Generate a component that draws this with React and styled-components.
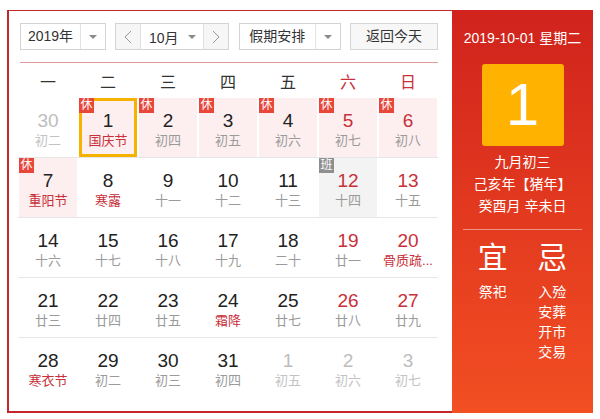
import React from 'react'
import styled, { createGlobalStyle } from 'styled-components'

const GlobalStyle = createGlobalStyle`
  body {
    margin: 0;
    background: #fff;
    font-family: "Liberation Sans", Arial, "Noto Sans CJK SC", sans-serif;
  }
`

const RED = '#c8303a'

const weekDays = [
  { label: '一' },
  { label: '二' },
  { label: '三' },
  { label: '四' },
  { label: '五' },
  { label: '六', weekend: true },
  { label: '日', weekend: true }
]

// day, lunar, flags: o = other month, r = 休, w = 班, f = festival, e = weekend, t = today
const weeks = [
  [['30', '初二', 'o'], ['1', '国庆节', 'rft'], ['2', '初四', 'r'], ['3', '初五', 'r'], ['4', '初六', 'r'], ['5', '初七', 're'], ['6', '初八', 're']],
  [['7', '重阳节', 'rf'], ['8', '寒露', 'f'], ['9', '十一', ''], ['10', '十二', ''], ['11', '十三', ''], ['12', '十四', 'we'], ['13', '十五', 'e']],
  [['14', '十六', ''], ['15', '十七', ''], ['16', '十八', ''], ['17', '十九', ''], ['18', '二十', ''], ['19', '廿一', 'e'], ['20', '骨质疏...', 'fe']],
  [['21', '廿三', ''], ['22', '廿四', ''], ['23', '廿五', ''], ['24', '霜降', 'f'], ['25', '廿七', ''], ['26', '廿八', 'e'], ['27', '廿九', 'e']],
  [['28', '寒衣节', 'f'], ['29', '初二', ''], ['30', '初三', ''], ['31', '初四', ''], ['1', '初五', 'o'], ['2', '初六', 'o'], ['3', '初七', 'o']]
]

const Calendar = () => {
  return (
    <>
      <GlobalStyle />
      <Wrapper>
        <Main>
          <Toolbar>
            <Select width={86}>
              <SelectText>2019年</SelectText>
              <SelectCaret />
            </Select>
            <MonthGroup>
              <ArrowBtn side='left'>
                <svg width='8' height='14' viewBox='0 0 8 14'>
                  <polyline points='7,1 1,7 7,13' fill='none' stroke='#999' strokeWidth='1' />
                </svg>
              </ArrowBtn>
              <MonthLabel>
                10月
                <Caret />
              </MonthLabel>
              <ArrowBtn side='right'>
                <svg width='8' height='14' viewBox='0 0 8 14'>
                  <polyline points='1,1 7,7 1,13' fill='none' stroke='#999' strokeWidth='1' />
                </svg>
              </ArrowBtn>
            </MonthGroup>
            <Select width={102}>
              <SelectText>假期安排</SelectText>
              <SelectCaret />
            </Select>
            <TodayBtn>返回今天</TodayBtn>
          </Toolbar>
          <RedLine />
          <WeekHeader>
            {weekDays.map(d => (
              <WeekDay key={d.label} weekend={d.weekend}>
                {d.label}
              </WeekDay>
            ))}
          </WeekHeader>
          {weeks.map((week, i) => (
            <Row key={i} last={i === weeks.length - 1}>
              {week.map(([day, lunar, flags], j) => {
                const rest = flags.includes('r')
                const work = flags.includes('w')
                const other = flags.includes('o')
                return (
                  <Cell key={j} rest={rest} work={work} today={flags.includes('t')}>
                    {rest && <Badge>休</Badge>}
                    {work && <Badge work>班</Badge>}
                    <Num other={other} red={flags.includes('e')}>{day}</Num>
                    <Lunar other={other} festival={flags.includes('f')}>{lunar}</Lunar>
                  </Cell>
                )
              })}
            </Row>
          ))}
        </Main>
        <Side>
          <DateLine>2019-10-01 星期二</DateLine>
          <BigDay>1</BigDay>
          <LunarInfo>
            <div>九月初三</div>
            <div>己亥年【猪年】</div>
            <div>癸酉月 辛未日</div>
          </LunarInfo>
          <Split />
          <YiJi>
            <YiJiCol>
              <YiJiTitle>宜</YiJiTitle>
              <YiJiItem>祭祀</YiJiItem>
            </YiJiCol>
            <YiJiCol>
              <YiJiTitle>忌</YiJiTitle>
              <YiJiItem>入殓</YiJiItem>
              <YiJiItem>安葬</YiJiItem>
              <YiJiItem>开市</YiJiItem>
              <YiJiItem>交易</YiJiItem>
            </YiJiCol>
          </YiJi>
        </Side>
      </Wrapper>
    </>
  )
}

export default Calendar

const Wrapper = styled.div`
  display: flex;
  width: 586px;
  height: 403px;
  margin: 10px 0 0 7px;
`

const Main = styled.div`
  width: 445px;
  box-sizing: border-box;
  border: solid #c4262c;
  border-width: 1px 0 2px 2px;
  padding: 12px 14px 0 9px;
  background: #fff;
`

const Toolbar = styled.div`
  display: flex;
  justify-content: space-between;
  height: 27px;
  margin-left: 2px;
`

const Select = styled.div`
  display: flex;
  width: ${p => p.width}px;
  box-sizing: border-box;
  border: 1px solid #d3d3d3;
  background: #fff;
`

const SelectText = styled.div`
  flex: 1;
  text-align: center;
  line-height: 25px;
  font-size: 14px;
  color: #333;
`

const Caret = styled.span`
  display: inline-block;
  width: 0;
  height: 0;
  border-left: 4px solid transparent;
  border-right: 4px solid transparent;
  border-top: 4px solid #8a8a8a;
`

const SelectCaret = styled(Caret)`
  display: block;
  width: 24px;
  height: 25px;
  border: none;
  border-left: 1px solid #e3e3e3;
  position: relative;

  &::after {
    content: '';
    position: absolute;
    left: 8px;
    top: 11px;
    border-left: 4px solid transparent;
    border-right: 4px solid transparent;
    border-top: 4px solid #8a8a8a;
  }
`

const MonthGroup = styled.div`
  display: flex;
  width: 114px;
  box-sizing: border-box;
  border: 1px solid #d3d3d3;
`

const ArrowBtn = styled.div`
  width: 24px;
  display: flex;
  align-items: center;
  justify-content: center;
  background: #f6f6f6;
  ${p => (p.side === 'left' ? 'border-right' : 'border-left')}: 1px solid #e0e0e0;
`

const MonthLabel = styled.div`
  flex: 1;
  display: flex;
  align-items: center;
  justify-content: center;
  gap: 9px;
  font-size: 14px;
  color: #333;
`

const TodayBtn = styled.div`
  width: 88px;
  box-sizing: border-box;
  border: 1px solid #d6d6d6;
  background: #f7f7f7;
  text-align: center;
  line-height: 25px;
  font-size: 14px;
  color: #333;
`

const RedLine = styled.div`
  height: 1px;
  margin: 12px 0 0 2px;
  background: #e29a9a;
`

const WeekHeader = styled.div`
  display: grid;
  grid-template-columns: repeat(7, 60px);
  height: 35px;
  align-items: center;
  text-align: center;
  font-size: 16px;
`

const WeekDay = styled.div`
  color: ${p => (p.weekend ? RED : '#333')};
`

const Row = styled.div`
  display: grid;
  grid-template-columns: repeat(7, 60px);
  height: 60px;
  box-sizing: border-box;
  border-bottom: ${p => (p.last ? 'none' : '1px solid #e6e6e6')};
`

const Cell = styled.div`
  position: relative;
  margin: 0 1px;
  height: 59px;
  box-sizing: border-box;
  padding-top: 12px;
  text-align: center;
  background: ${p => (p.rest ? '#fdefef' : p.work ? '#f3f3f3' : '#fff')};
  box-shadow: ${p => (p.today ? 'inset 0 0 0 3px #f5b300' : 'none')};
`

const Badge = styled.span`
  position: absolute;
  top: 0;
  left: 0;
  width: 15px;
  height: 15px;
  line-height: 15px;
  font-size: 12px;
  color: #fff;
  background: ${p => (p.work ? '#8f8f8f' : '#e8463a')};
`

const Num = styled.div`
  font-size: 19px;
  line-height: 22px;
  color: ${p => (p.other ? '#bdbdbd' : p.red ? RED : '#222')};
`

const Lunar = styled.div`
  font-size: 13px;
  line-height: 18px;
  white-space: nowrap;
  color: ${p => (p.other ? '#c2c2c2' : p.festival ? RED : '#9a9a9a')};
`

const Side = styled.div`
  flex: 1;
  box-sizing: border-box;
  padding: 18px 11px 0;
  background: linear-gradient(180deg, #d0231d 0%, #e2391f 50%, #f24f23 100%);
  color: #fff;
  text-align: center;
`

const DateLine = styled.div`
  font-size: 14px;
  line-height: 20px;
`

const BigDay = styled.div`
  width: 82px;
  height: 82px;
  margin: 16px auto 0;
  border-radius: 3px;
  background: #ffb300;
  font-size: 60px;
  line-height: 82px;
`

const LunarInfo = styled.div`
  margin-top: 5px;
  font-size: 14px;
  line-height: 22px;
`

const Split = styled.div`
  height: 1px;
  margin-top: 12px;
  background: rgba(255, 255, 255, 0.45);
`

const YiJi = styled.div`
  display: grid;
  grid-template-columns: 1fr 1fr;
  margin-top: 10px;
`

const YiJiCol = styled.div`
  display: flex;
  flex-direction: column;
  align-items: center;
`

const YiJiTitle = styled.div`
  font-size: 30px;
  line-height: 36px;
  margin-bottom: 6px;
`

const YiJiItem = styled.div`
  font-size: 14px;
  line-height: 20px;
`
